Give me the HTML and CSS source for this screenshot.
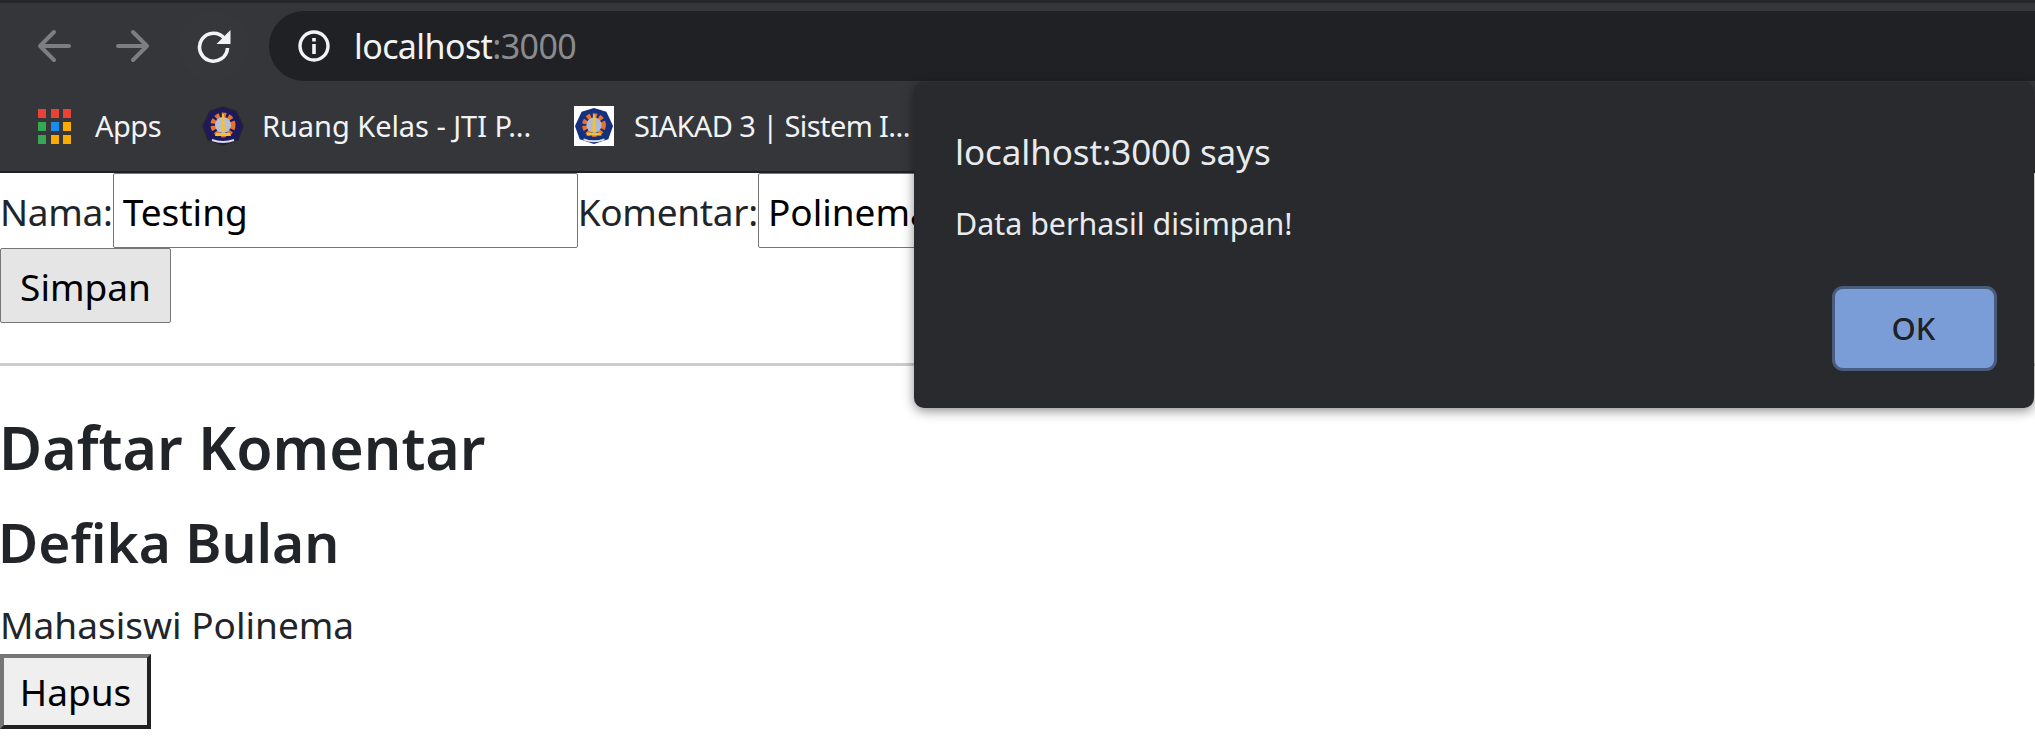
FILE: index.html
```html
<!DOCTYPE html>
<html lang="en">
<head>
<meta charset="utf-8">
<title>localhost:3000</title>
<link rel="stylesheet" href="styles.css">
</head>
<body>
<header class="chrome">
  <div class="toolbar">
    <div class="nav">
      <svg class="nav-icon" width="34" height="34" viewBox="0 0 34 34"><path d="M32 17H3M17 3 3 17l14 14" fill="none" stroke="#7d7e81" stroke-width="4" stroke-linecap="round" stroke-linejoin="round"/></svg>
      <svg class="nav-icon" width="34" height="34" viewBox="0 0 34 34"><path d="M2 17h29M17 3l14 14-14 14" fill="none" stroke="#7d7e81" stroke-width="4" stroke-linecap="round" stroke-linejoin="round"/></svg>
      <div class="reload">
        <svg width="36" height="36" viewBox="0 0 36 36"><path d="M28.5 10.5A14 14 0 1 0 31.5 20" fill="none" stroke="#f1f3f4" stroke-width="3.6"/><path d="M34.5 2v14h-14z" fill="#f1f3f4"/></svg>
      </div>
    </div>
    <div class="omnibox">
      <svg class="info" width="32" height="32" viewBox="0 0 32 32"><circle cx="16" cy="16" r="14" fill="none" stroke="#f1f3f4" stroke-width="3.4"/><path d="M14.2 14h3.6v10h-3.6zM14.2 8h3.6v3.6h-3.6z" fill="#f1f3f4"/></svg>
      <span class="url">localhost<span class="url-dim">:3000</span></span>
    </div>
  </div>
  <nav class="bookmarks">
    <a class="bookmark apps">
      <span class="grid">
        <i class="red"></i><i class="red"></i><i class="red"></i>
        <i class="green"></i><i class="blue"></i><i class="amber"></i>
        <i class="green"></i><i class="amber"></i><i class="amber"></i>
      </span>
      <span class="bookmark-text">Apps</span>
    </a>
    <a class="bookmark ruang">
      <svg width="42" height="40" viewBox="0 0 42 40"><path d="M21 1 34 5l7 15-5 14-15 5-15-5-5-14L8 5z" fill="#1c1a5c" stroke="#26242e" stroke-width="1.5"/><circle cx="21" cy="19" r="9.5" fill="none" stroke="#e8742a" stroke-width="6" stroke-dasharray="4 2.2"/><circle cx="21" cy="19" r="8" fill="#b9bed0"/><path d="M20 8h2l1 18h-4zM14 27h14l1 3H13z" fill="#f2c230"/><path d="M10 34q11 4 22 0" fill="none" stroke="#d9dbe6" stroke-width="2"/></svg>
      <span class="bookmark-text">Ruang Kelas - JTI P...</span>
    </a>
    <a class="bookmark siakad">
      <span class="logo-box"><svg width="40" height="40" viewBox="0 0 42 40"><path d="M21 1 34 5l7 15-5 14-15 5-15-5-5-14L8 5z" fill="#14307f"/><circle cx="21" cy="19" r="9.5" fill="none" stroke="#e8742a" stroke-width="6" stroke-dasharray="4 2.2"/><circle cx="21" cy="19" r="8" fill="#aeb9d8"/><path d="M20 8h2l1 18h-4zM14 27h14l1 3H13z" fill="#f2c230"/><path d="M10 34q11 4 22 0" fill="none" stroke="#dfe3ee" stroke-width="2"/></svg></span>
      <span class="bookmark-text">SIAKAD 3 | Sistem I...</span>
    </a>
  </nav>
</header>

<main class="page">
  <form class="form">
    <label class="field-label">Nama:</label><input class="text-input name-input" value="Testing"><label class="field-label">Komentar:</label><input class="text-input comment-input" value="Polinema">
    <div><button type="button" class="save">Simpan</button></div>
  </form>
  <hr class="rule">
  <h2 class="title">Daftar Komentar</h2>
  <h3 class="author">Defika Bulan</h3>
  <p class="comment">Mahasiswi Polinema</p>
  <button type="button" class="delete">Hapus</button>
</main>

<div class="dialog">
  <h4 class="dialog-title">localhost:3000 says</h4>
  <p class="dialog-text">Data berhasil disimpan!</p>
  <div class="dialog-actions"><button type="button" class="ok">OK</button></div>
</div>
</body>
</html>
```
FILE: styles.css
```css
* { box-sizing: border-box; }
html, body { margin: 0; padding: 0; height: 750px; overflow: hidden; background: #fff; }
body { font-family: "Noto Sans", "Open Sans", sans-serif; color: #212529; position: relative; }

.chrome { background: #35363a; border-top: 3px solid #26272a; border-bottom: 2px solid #202124; height: 173px; }
.toolbar { display: flex; align-items: flex-start; height: 88px; padding: 8px 0 0 37px; }
.nav { display: flex; align-items: center; width: 232px; height: 70px; }
.nav-icon { flex: none; }
.nav-icon + .nav-icon { margin-left: 45px; }
.reload { flex: none; width: 70px; height: 70px; margin-left: 29px; border-radius: 50%; background: #36373b; display: flex; align-items: center; justify-content: center; }
.omnibox { flex: 1; height: 70px; background: #202124; border-radius: 35px 0 0 35px; display: flex; align-items: center; padding-left: 29px; }
.info { flex: none; margin-right: 24px; }
.url { font-size: 34px; color: #f1f3f4; letter-spacing: -0.6px; }
.url-dim { color: #8a8b8e; }

.bookmarks { display: flex; align-items: center; height: 80px; padding-left: 38px; padding-bottom: 10px; }
.bookmark { display: flex; align-items: center; font-size: 29px; color: #f1f3f4; white-space: nowrap; letter-spacing: -0.5px; }
.bookmark-text { padding-bottom: 2px; }
.apps { gap: 24px; width: 164px; }
.ruang { gap: 18px; width: 372px; letter-spacing: -0.05px; }
.siakad { gap: 20px; letter-spacing: -0.6px; }
.grid { display: grid; grid-template-columns: repeat(3, 8px); grid-auto-rows: 9px; gap: 4px 4.5px; }
.grid i { display: block; }
.red { background: #ea4335; }
.green { background: #34a853; }
.blue { background: #1a8cf0; }
.amber { background: #f9ab00; }
.logo-box { display: block; width: 40px; height: 40px; background: #fff; }
.logo-box svg { display: block; }

.form { font-size: 37px; line-height: 1; white-space: nowrap; }
.field-label { letter-spacing: -0.3px; }
.text-input { font-family: inherit; font-size: 37px; color: #000; height: 75px; padding: 2px 9px 0; border: 1px solid #767676; border-radius: 2px; background: #fff; outline: none; margin: 0; }
.name-input { width: 465px; }
.comment-input { width: 464px; }
.save { display: block; font-family: inherit; font-size: 37px; color: #000; width: 171px; height: 75px; padding: 2px 0 0; border: 1px solid #767676; border-radius: 2px; background: #e5e5e5; }

.rule { height: 3px; margin: 40px 0 0; border: 0; background: #ccc; }
.title { margin: 36px 0 0; font-size: 59px; line-height: 90px; font-weight: 600; text-indent: -1px; }
.author { margin: 8px 0 0; font-size: 55px; line-height: 84px; font-weight: 600; text-indent: -2px; }
.comment { margin: 14px 0 0; font-size: 37px; line-height: 54px; }
.delete { display: block; margin-top: 2px; font-family: inherit; font-size: 37px; color: #000; width: 151px; height: 75px; padding: 0; border: 4px solid; border-color: #767676 #212121 #212121 #767676; background: #efefef; }

.dialog { position: absolute; top: 82px; right: 1px; width: 1120px; height: 326px; padding: 47px 41px 0; background: #292a2d; border-radius: 10px; box-shadow: 0 3px 12px rgba(0, 0, 0, 0.45); color: #e8eaed; display: flex; flex-direction: column; }
.dialog-title { margin: 0; font-size: 35px; line-height: 46px; font-weight: 400; letter-spacing: -0.1px; }
.dialog-text { margin: 27px 0 0; font-size: 30.4px; line-height: 44px; }
.dialog-actions { display: flex; justify-content: flex-end; margin-top: 40px; margin-right: -4px; }
.ok { width: 165px; height: 85px; font-family: inherit; font-size: 31px; font-weight: 500; color: #202124; background: #7a9dd8; border: 3px solid #4a5c7e; border-radius: 11px; padding: 0 2px 2px 0; }
```
